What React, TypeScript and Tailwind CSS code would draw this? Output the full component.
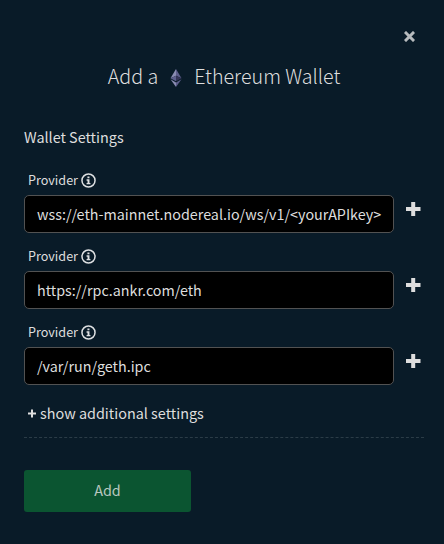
import React from "react";

function Ethereum() {
  return (
    <svg width="12" height="18" viewBox="0 0 12 18" className="mr-[12px] ml-[12px] mt-[3px] shrink-0">
      <path d="M6 0 0.5 9.2 6 6.8Z" fill="#8a8cb2" />
      <path d="M6 0 11.5 9.2 6 6.8Z" fill="#5d5e8b" />
      <path d="M0.5 9.2 6 6.8V12.3Z" fill="#5d5f8d" />
      <path d="M11.5 9.2 6 6.8V12.3Z" fill="#343557" />
      <path d="M0.5 10.3 6 13.5V18Z" fill="#8a8cb2" />
      <path d="M11.5 10.3 6 13.5V18Z" fill="#5d5e8b" />
    </svg>
  );
}

function InfoIcon() {
  return (
    <svg width="15" height="15" viewBox="0 0 14 14" className="ml-[3.5px] shrink-0 text-[#dee0e2]">
      <circle cx="7" cy="7" r="6.1" fill="none" stroke="currentColor" strokeWidth="1.4" />
      <path d="M6 3.2h1.9v1.7H6ZM5.2 5.9h2.7v3.4h.9v1.3H5.2V9.3h.9V7.2h-.9Z" fill="currentColor" />
    </svg>
  );
}

function Plus() {
  return (
    <svg width="15" height="14" viewBox="0 0 15 14" className="mt-[7px] ml-[12px] shrink-0">
      <path d="M5.2 0h4v5h5.3v4H9.2v5h-4V9H0V5h5.2Z" fill="#dedede" />
    </svg>
  );
}

function ProviderField({ value }: { value: string }) {
  return (
    <div className="h-[76px]">
      <label className="flex h-[22px] items-center pl-[4px] text-[12.6px]">
        <span className="w-[49px] whitespace-nowrap">Provider</span>
        <InfoIcon />
      </label>
      <div className="mt-[4px] flex">
        <div className="flex h-[38px] w-[370px] shrink-0 items-center overflow-hidden rounded-[5px] border border-[#525252] bg-black pl-[12px] text-[14.34px] whitespace-nowrap">
          {value}
        </div>
        <Plus />
      </div>
    </div>
  );
}

export default function App() {
  return (
    <main className="h-[544px] w-[444px] overflow-hidden bg-[#091b28] pr-[20px] pl-[24px] font-['Noto_Sans_CJK_SC','Source_Sans_Pro',sans-serif] leading-[24px] text-[#dedede]">
      <div className="flex h-[61px] justify-end pt-[31px] pr-[9px]">
        <svg width="11" height="11" viewBox="0 0 11 11">
          <path d="M2 2 9 9M9 2 2 9" stroke="#b7bbbe" strokeWidth="3" strokeLinecap="square" />
        </svg>
      </div>
      <h1 className="flex h-[30px] items-center justify-center text-[19.7px] font-light whitespace-nowrap">
        <span>Add a</span>
        <Ethereum />
        <span>Ethereum Wallet</span>
      </h1>
      <h2 className="mt-[34px] h-[24px] text-[14.4px]">Wallet Settings</h2>
      <div className="mt-[20px]">
        <ProviderField value="wss://eth-mainnet.nodereal.io/ws/v1/<yourAPIkey>" />
        <ProviderField value="https://rpc.ankr.com/eth" />
        <ProviderField value="/var/run/geth.ipc" />
      </div>
      <div className="mt-[4px] flex h-[24px] items-center pl-[4px] text-[14.4px] whitespace-nowrap">
        <svg width="8" height="9" viewBox="0 0 8 9" className="mr-[4px] shrink-0">
          <path d="M3 .5h2v3h3v2H5v3H3v-3H0v-2h3Z" fill="#dedede" />
        </svg>
        <span>show additional settings</span>
      </div>
      <div className="mt-[12px] border-t border-dashed border-[#2b3c47]" />
      <button className="mt-[32px] h-[42px] w-[167px] rounded-[3px] bg-[#0b5531] pb-[2px] text-[14.4px] text-[#b9c7bf]">
        Add
      </button>
    </main>
  );
}
